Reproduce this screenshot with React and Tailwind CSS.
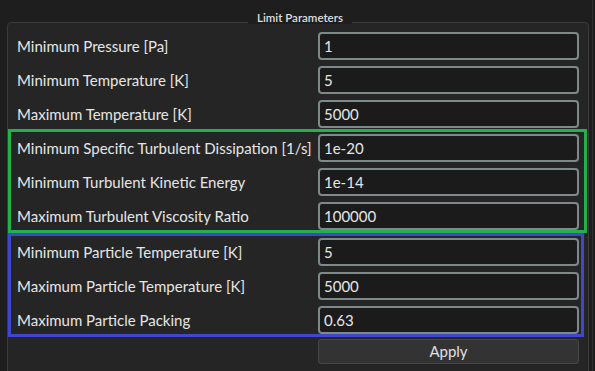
import React from 'react'

const plain = [
    {label: "Minimum Pressure [Pa]", value: "1"},
    {label: "Minimum Temperature [K]", value: "5"},
    {label: "Maximum Temperature [K]", value: "5000"},
]
const turb = [
    {label: "Minimum Specific Turbulent Dissipation [1/s]", value: "1e-20"},
    {label: "Minimum Turbulent Kinetic Energy", value: "1e-14"},
    {label: "Maximum Turbulent Viscosity Ratio", value: "100000"},
]
const particle = [
    {label: "Minimum Particle Temperature [K]", value: "5"},
    {label: "Maximum Particle Temperature [K]", value: "5000"},
    {label: "Maximum Particle Packing", value: "0.63"},
]

const Row = ({label, value, inset}) => (
    <div className={`grid items-center h-[28px] ${inset ? "grid-cols-[307px_261px]" : "grid-cols-[310px_261px]"}`}>
        <span className={`${inset ? "pl-[6px]" : "pl-[9px]"} text-[15px] text-[#e6e6e6] whitespace-nowrap`}>{label}</span>
        <div className="h-[28px] border-2 border-[#7d8a8a] rounded-[4px] bg-[#1b1b1b] flex items-center px-[4px] text-[15px] text-[#e6e6e6]">
            {value}
        </div>
    </div>
)

const App = () => {
    return (
        <div className="w-[595px] h-[371px] bg-[#1e1e1e] overflow-hidden relative font-['Lato',sans-serif]">
            <div className="absolute right-[2px] top-0 bottom-0 w-px bg-[#2e2e2e]" />

            {/* group box */}
            <div className="absolute left-[7px] top-[22px] w-[582px] h-[360px] border border-[#3a3a3a] rounded-[4px] bg-[#252525]">
                <div className="absolute left-[240px] -top-[12px] w-[104px] h-[13px] bg-[#1e1e1e] flex items-center justify-center text-[11.5px] font-semibold text-[#dedede]">
                    Limit Parameters
                </div>

                <div className="flex flex-col pt-[9px]">
                    <div className="flex flex-col gap-[6px]">
                        {plain.map(r => <Row key={r.label} {...r} />)}
                    </div>

                    {/* green highlight */}
                    <div className="mt-[1px] mr-[1px] border-[3px] border-[#22b14c] pt-[2px] flex flex-col gap-[6px]">
                        {turb.map(r => <Row key={r.label} {...r} inset />)}
                    </div>

                    {/* blue highlight */}
                    <div className="mr-[4px] border-[3px] border-[#3f48cc] pt-[2px] flex flex-col gap-[6px]">
                        {particle.map(r => <Row key={r.label} {...r} inset />)}
                    </div>

                    <div className="grid grid-cols-[310px_261px] mt-[2px]">
                        <span />
                        <button className="h-[25px] bg-[#333333] border border-[#464646] rounded-[3px] text-[15px] text-[#e0e0e0]">
                            Apply
                        </button>
                    </div>
                </div>
            </div>
        </div>
    )
}
export default App
